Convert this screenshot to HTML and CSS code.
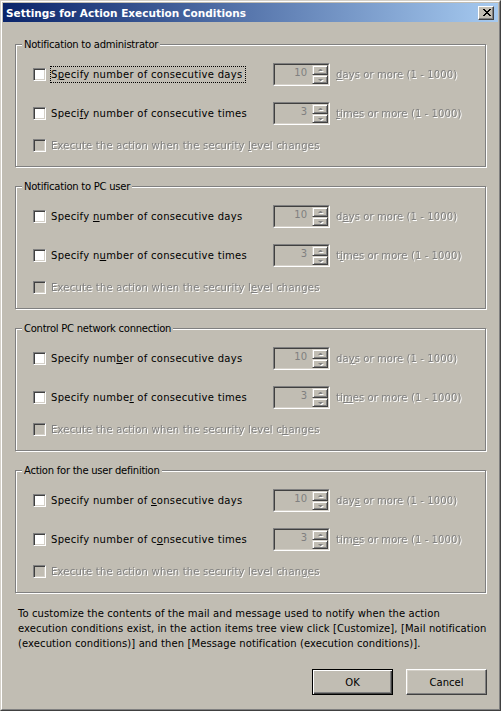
FILE: index.html
```html
<!DOCTYPE html>
<html lang="en">
<head>
<meta charset="utf-8">
<title>Settings for Action Execution Conditions</title>
<link rel="stylesheet" href="styles.css">
</head>
<body>
<div class="window">
  <div class="frame">
    <div class="titlebar">
      <span class="title">Settings for Action Execution Conditions</span>
      <span class="close"><svg width="8" height="7" viewBox="0 0 8 7" shape-rendering="crispEdges"><path d="M0 0h2v1H0zM6 0h2v1H6zM1 1h2v1H1zM5 1h2v1H5zM2 2h4v1H2zM3 3h2v1H3zM2 4h4v1H2zM1 5h2v1H1zM5 5h2v1H5zM0 6h2v1H0zM6 6h2v1H6z" fill="#000"/></svg></span>
    </div>
    <div class="content">
      <fieldset class="group">
        <legend>Notification to administrator</legend>
        <div class="row">
          <label class="check"><span class="box"></span><span class="text focus">S<u>p</u>ecify number of consecutive days</span></label>
          <div class="spin"><div class="spin-in"><span class="spin-val">10</span><span class="spin-btns"><span class="spin-btn up"></span><span class="spin-btn down"></span></span></div></div>
          <span class="unit disabled"><u>d</u>ays or more (1 - 1000)</span>
        </div>
        <div class="row">
          <label class="check"><span class="box"></span><span class="text">Speci<u>f</u>y number of consecutive times</span></label>
          <div class="spin"><div class="spin-in"><span class="spin-val">3</span><span class="spin-btns"><span class="spin-btn up"></span><span class="spin-btn down"></span></span></div></div>
          <span class="unit disabled"><u>t</u>imes or more (1 - 1000)</span>
        </div>
        <div class="row small">
          <label class="check wide"><span class="box off"></span><span class="text disabled">Execute the action when the security <u>l</u>evel changes</span></label>
        </div>
      </fieldset>

      <fieldset class="group">
        <legend>Notification to PC user</legend>
        <div class="row">
          <label class="check"><span class="box"></span><span class="text">Specify <u>n</u>umber of consecutive days</span></label>
          <div class="spin"><div class="spin-in"><span class="spin-val">10</span><span class="spin-btns"><span class="spin-btn up"></span><span class="spin-btn down"></span></span></div></div>
          <span class="unit disabled">d<u>a</u>ys or more (1 - 1000)</span>
        </div>
        <div class="row">
          <label class="check"><span class="box"></span><span class="text">Specify n<u>u</u>mber of consecutive times</span></label>
          <div class="spin"><div class="spin-in"><span class="spin-val">3</span><span class="spin-btns"><span class="spin-btn up"></span><span class="spin-btn down"></span></span></div></div>
          <span class="unit disabled">t<u>i</u>mes or more (1 - 1000)</span>
        </div>
        <div class="row small">
          <label class="check wide"><span class="box off"></span><span class="text disabled">Execute the action when the security l<u>e</u>vel changes</span></label>
        </div>
      </fieldset>

      <fieldset class="group">
        <legend>Control PC network connection</legend>
        <div class="row">
          <label class="check"><span class="box"></span><span class="text">Specify num<u>b</u>er of consecutive days</span></label>
          <div class="spin"><div class="spin-in"><span class="spin-val">10</span><span class="spin-btns"><span class="spin-btn up"></span><span class="spin-btn down"></span></span></div></div>
          <span class="unit disabled">da<u>y</u>s or more (1 - 1000)</span>
        </div>
        <div class="row">
          <label class="check"><span class="box"></span><span class="text">Specify numbe<u>r</u> of consecutive times</span></label>
          <div class="spin"><div class="spin-in"><span class="spin-val">3</span><span class="spin-btns"><span class="spin-btn up"></span><span class="spin-btn down"></span></span></div></div>
          <span class="unit disabled">ti<u>m</u>es or more (1 - 1000)</span>
        </div>
        <div class="row small">
          <label class="check wide"><span class="box off"></span><span class="text disabled">Execute the action when the security level c<u>h</u>anges</span></label>
        </div>
      </fieldset>

      <fieldset class="group">
        <legend>Action for the user definition</legend>
        <div class="row">
          <label class="check"><span class="box"></span><span class="text">Specify number of <u>c</u>onsecutive days</span></label>
          <div class="spin"><div class="spin-in"><span class="spin-val">10</span><span class="spin-btns"><span class="spin-btn up"></span><span class="spin-btn down"></span></span></div></div>
          <span class="unit disabled">day<u>s</u> or more (1 - 1000)</span>
        </div>
        <div class="row">
          <label class="check"><span class="box"></span><span class="text">Specify number of c<u>o</u>nsecutive times</span></label>
          <div class="spin"><div class="spin-in"><span class="spin-val">3</span><span class="spin-btns"><span class="spin-btn up"></span><span class="spin-btn down"></span></span></div></div>
          <span class="unit disabled">tim<u>e</u>s or more (1 - 1000)</span>
        </div>
        <div class="row small">
          <label class="check wide"><span class="box off"></span><span class="text disabled">Execute the action when the security level chan<u>g</u>es</span></label>
        </div>
      </fieldset>

      <p class="note">To customize the contents of the mail and message used to notify when the action<br>execution conditions exist, in the action items tree view click [Customize], [Mail notification<br>(execution conditions)] and then [Message notification (execution conditions)].</p>

      <div class="actions">
        <button class="btn default" type="button">OK</button>
        <button class="btn" type="button">Cancel</button>
      </div>
    </div>
  </div>
</div>
</body>
</html>
```

FILE: styles.css
```css
* { box-sizing: border-box; }

html, body {
  margin: 0;
  padding: 0;
}

body {
  width: 501px;
  height: 711px;
  background: #c1bdb3;
  font-family: "DejaVu Sans", Verdana, sans-serif;
  font-size: 10px;
  color: #000;
}

.window {
  width: 501px;
  height: 711px;
  border: 1px solid;
  border-color: #d4d0c8 #404040 #404040 #d4d0c8;
  background: #c1bdb3;
}

.frame {
  height: 100%;
  border: 1px solid;
  border-color: #fff #808080 #808080 #fff;
  padding: 1px;
  display: flex;
  flex-direction: column;
}

.titlebar {
  height: 19px;
  flex: none;
  display: flex;
  align-items: center;
  justify-content: space-between;
  padding: 0 4px 0 3px;
  background: linear-gradient(to right, #0a246a, #a6caf0);
}

.title {
  color: #fff;
  font-weight: bold;
  font-size: 10.5px;
  white-space: nowrap;
}

.close {
  width: 16px;
  height: 14px;
  display: flex;
  align-items: center;
  justify-content: center;
  background: #c1bdb3;
  border: 1px solid;
  border-color: #fff #404040 #404040 #fff;
  box-shadow: inset -1px -1px 0 #808080;
  padding-left: 1px;
}

.close svg { display: block; }

.content {
  flex: 1;
  display: flex;
  flex-direction: column;
}

.group {
  margin: 13px 12px 0 12px;
  padding: 12px 0 14px 6px;
  border: 1px solid #808080;
  box-shadow: inset 1px 1px 0 #fff, 1px 1px 0 #fff;
  min-width: 0;
}

.group:first-child { margin-top: 16px; }

.group legend {
  padding: 0 2px;
  line-height: 13px;
  letter-spacing: -0.25px;
  background: #c1bdb3;
}

.row {
  display: flex;
  align-items: center;
  height: 23px;
  margin-left: 11px;
}

.row + .row { margin-top: 16px; }

.row.small {
  height: 13px;
  margin-top: 14px;
}

.check {
  width: 240px;
  flex: none;
  display: flex;
  align-items: center;
}

.check.wide { width: auto; }

.box {
  width: 13px;
  height: 13px;
  flex: none;
  margin-right: 4px;
  background: #fff;
  border: 1px solid;
  border-color: #808080 #fff #fff #808080;
  box-shadow: inset 1px 1px 0 #404040, inset -1px -1px 0 #d4d0c8;
}

.box.off { background: #c1bdb3; }

.text {
  padding: 1px 2px 1px 0;
  border: 1px dotted transparent;
  line-height: 13px;
  letter-spacing: 0.3px;
  white-space: nowrap;
}

.text.disabled { letter-spacing: 0.2px; }

.text.focus { border-color: #000; }

.disabled {
  color: #808080;
  text-shadow: 1px 1px 0 #fff;
  will-change: transform;
}

.spin {
  width: 57px;
  height: 23px;
  flex: none;
  border: 1px solid;
  border-color: #808080 #fff #fff #808080;
}

.spin-in {
  height: 100%;
  display: flex;
  border: 1px solid;
  border-color: #404040 #d4d0c8 #d4d0c8 #404040;
}

.spin-val {
  flex: 1;
  text-align: right;
  padding: 1px 5px 0 0;
  line-height: 13px;
  color: #808080;
}

.spin-btns {
  width: 16px;
  display: flex;
  flex-direction: column;
}

.spin-btn {
  display: flex;
  align-items: center;
  justify-content: center;
  background: #c1bdb3;
  border: 1px solid;
  border-color: #d4d0c8 #404040 #404040 #d4d0c8;
  box-shadow: inset 1px 1px 0 #fff, inset -1px -1px 0 #808080;
}

.spin-btn.up { height: 10px; }
.spin-btn.down { height: 9px; }

.spin-btn::after {
  content: "";
  width: 1px;
  height: 0;
  border-left: 2px solid transparent;
  border-right: 2px solid transparent;
  filter: drop-shadow(1px 1px 0 #fff);
}

.spin-btn.up::after { border-bottom: 2px solid #808080; }
.spin-btn.down::after { border-top: 2px solid #808080; }

.unit {
  margin-left: 6px;
  white-space: nowrap;
  line-height: 13px;
  letter-spacing: 0.1px;
}

.note {
  margin: 13px 8px 0 15px;
  line-height: 15px;
  letter-spacing: 0.1px;
  white-space: nowrap;
}

.actions {
  display: flex;
  justify-content: flex-end;
  gap: 13px;
  margin-top: 18px;
  padding-right: 11px;
}

.btn {
  width: 81px;
  height: 26px;
  margin: 0;
  padding: 0;
  font-family: "DejaVu Sans", Verdana, sans-serif;
  font-size: 10px;
  color: #000;
  background: #c1bdb3;
  border: 1px solid;
  border-color: #fff #404040 #404040 #fff;
  box-shadow: inset -1px -1px 0 #808080, inset 1px 1px 0 #d4d0c8;
}

.btn.default {
  border-color: #000;
  box-shadow: inset 1px 1px 0 #fff, inset -1px -1px 0 #404040, inset -2px -2px 0 #808080;
}
```
